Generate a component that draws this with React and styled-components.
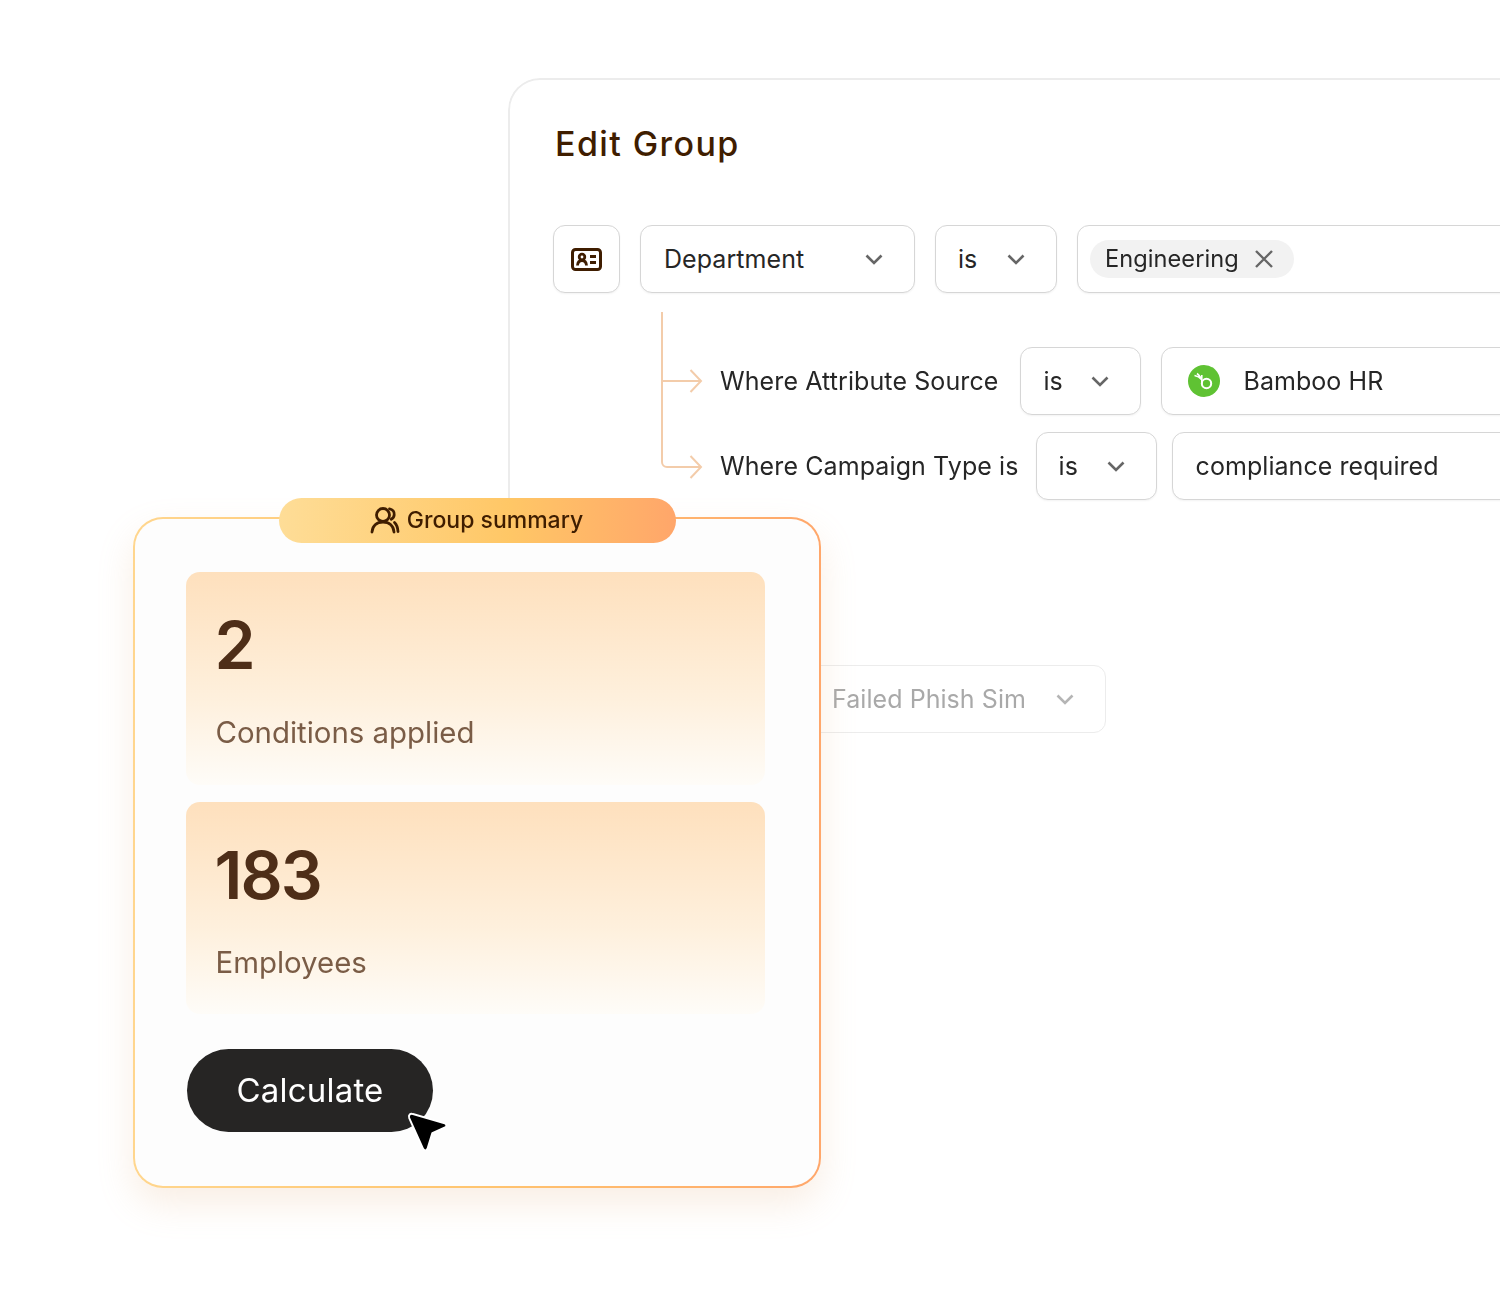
import React from "react";
import styled, { createGlobalStyle } from "styled-components";

const GlobalStyle = createGlobalStyle`
body{
    margin: 0;
    background: #fff;
    font-family: "Inter", "Liberation Sans", sans-serif;
}
`

const Stage = styled.div`
    position: relative;
    width: 1500px;
    height: 1310px;
    overflow: hidden;
    padding: 78px 0 0 508px;
    box-sizing: border-box;
`

const Panel = styled.section`
    width: 1100px;
    height: 760px;
    box-sizing: border-box;
    padding: 44px 0 0 43px;
    border: 2px solid #ececec;
    border-radius: 32px;
    background: #fff;
    -webkit-mask-image: linear-gradient(180deg, #000 88%, transparent 98%);
    mask-image: linear-gradient(180deg, #000 88%, transparent 98%);
`

const Title = styled.h1`
    margin: 0 0 61px 2px;
    font-size: 34px;
    line-height: 40px;
    font-weight: 500;
    letter-spacing: 1.4px;
    color: #3f1d00;
`

const Row = styled.div`
    display: flex;
    align-items: center;
    gap: ${(p) => p.$gap || 20}px;
    height: 68px;
`

const Box = styled.div`
    display: flex;
    align-items: center;
    justify-content: ${(p) => (p.$between ? "space-between" : "flex-start")};
    flex: none;
    width: ${(p) => p.$w}px;
    height: 68px;
    box-sizing: border-box;
    padding: ${(p) => p.$pad || "0 30px 0 22px"};
    border: 1.5px solid #d6d6d6;
    border-radius: 12px;
    background: #fff;
    box-shadow: 0 1px 2px rgba(0, 0, 0, .05);
    font-size: 25px;
    letter-spacing: .06px;
    color: #262626;
    white-space: nowrap;
`

const IconBox = styled(Box)`
    justify-content: center;
    padding: 0;
`

const Chip = styled.span`
    display: flex;
    align-items: center;
    gap: 15px;
    height: 38px;
    padding: 0 20px 1px 15px;
    box-sizing: border-box;
    border-radius: 20px;
    background: #f2f2f2;
    font-size: 23.6px;
`

const Tree = styled.div`
    display: flex;
    margin: 19px 0 0 108px;
`

const Connector = styled.svg`
    flex: none;
    display: block;
`

const TreeRows = styled.div`
    display: flex;
    flex-direction: column;
    gap: 17px;
    padding: 35px 0 0 17px;
`

const RowLabel = styled.span`
    font-size: 25px;
    letter-spacing: .1px;
    color: #262626;
    white-space: nowrap;
    margin-right: 2px;
`

const BrandName = styled.span`
    margin-left: 23px;
`

const FadedRow = styled.div`
    margin: 165px 0 0 255px;
`

const FadedBox = styled(Box)`
    border-color: #ececec;
    box-shadow: none;
    color: #a9a9a9;
    padding-left: 23px;
`

const Summary = styled.aside`
    position: absolute;
    left: 133px;
    top: 517px;
    width: 688px;
    height: 671px;
    box-sizing: border-box;
    padding: 53px 54px 0 51px;
    border: 2px solid transparent;
    border-radius: 30px;
    background:
        linear-gradient(#fdfdfd, #fdfdfd) padding-box,
        linear-gradient(90deg, #ffd68e 0%, #ffc570 50%, #ffa76b 100%) border-box;
    box-shadow: 0 16px 36px rgba(225, 170, 120, .2);
`

const Pill = styled.div`
    position: absolute;
    left: 144px;
    top: -21px;
    width: 397px;
    height: 45px;
    box-sizing: border-box;
    padding: 0 2px 2px 0;
    display: flex;
    align-items: center;
    justify-content: center;
    gap: 7px;
    border-radius: 23px;
    background: linear-gradient(90deg, #fedd97 0%, #ffc766 58%, #ffa66a 100%);
    font-size: 23px;
    font-weight: 500;
    color: #3f1d00;
`

const Stat = styled.div`
    box-sizing: border-box;
    height: ${(p) => p.$h}px;
    margin-bottom: 17px;
    padding: 33px 29.5px 0;
    border-radius: 14px;
    background: linear-gradient(180deg, #fee0bd 0%, #fef0dd 60%, #fefcf8 100%);
`

const StatValue = styled.div`
    margin-left: -1px;
    font-size: 66px;
    line-height: 80px;
    font-weight: 600;
    letter-spacing: -2px;
    color: #4e2e18;
`

const StatLabel = styled.div`
    margin-top: 30px;
    font-size: 29.4px;
    line-height: 36px;
    color: #7a5c46;
`

const CalcButton = styled.button`
    display: block;
    width: 246px;
    height: 83px;
    margin: 35px 0 0 1px;
    padding: 0 0 2px;
    border: 0;
    border-radius: 42px;
    background: #262524;
    color: #fff;
    font-family: inherit;
    font-size: 33px;
    letter-spacing: .2px;
`

const Pointer = styled.svg`
    position: absolute;
    left: 271px;
    top: 593px;
`

const Chevron = ({ color = "#666" }) => (
    <svg width="20" height="20" viewBox="0 0 20 20" fill="none">
        <path d="M2.5 6.5 10 14l7.500-7.500" stroke={color} strokeWidth="2.6" />
    </svg>
)

const CloseIcon = () => (
    <svg width="20" height="20" viewBox="0 0 20 20" fill="none">
        <path d="M2 2l16 16M18 2 2 18" stroke="#666" strokeWidth="2.4" />
    </svg>
)

const IdCardIcon = () => (
    <svg width="31" height="23" viewBox="0 0 31 23" fill="none" stroke="#3f1d00">
        <rect x="1.500" y="1.500" width="28" height="20" rx="3" strokeWidth="3" />
        <circle cx="11" cy="9" r="2.800" strokeWidth="2.800" />
        <path d="M6.500 17.500c.3-3.500 2-5 4.500-5s4.200 1.500 4.500 5" strokeWidth="2.800" />
        <path d="M19 8.500h6M19 14.500h6" strokeWidth="3" />
    </svg>
)

const BambooLogo = () => (
    <svg width="32" height="32" viewBox="0 0 32 32" fill="none">
        <circle cx="16" cy="16" r="16" fill="#5fc233" />
        <circle cx="18.500" cy="18.500" r="4.700" stroke="#fff" strokeWidth="2" />
        <path d="M13.800 10v9M13.500 14.500C11.500 12 9.500 11 6.500 10.500M13 13c-1-1.500-2-3-4-4.500" stroke="#fff" strokeWidth="1.600" />
    </svg>
)

const GroupIcon = () => (
    <svg width="30" height="28" viewBox="0 0 30 28" fill="none" stroke="#3f1d00" strokeWidth="2.800" strokeLinecap="round">
        <circle cx="13" cy="9" r="6.500" />
        <path d="M2 26c.5-6.500 5-10 11-10s10.500 3.500 11 10" />
        <path d="M19.500 2.800c3.200.5 5 3.200 4.700 6-.2 2-1.300 3.500-3 4.500" />
        <path d="M24.500 16.500c2.200 2 3.200 5 3.500 9" />
    </svg>
)

const Connectors = () => (
    <Connector width="42" height="168" viewBox="0 0 42 168" fill="none" stroke="#f3ccaa" strokeWidth="2">
        <path d="M1 0V150a5 5 0 0 0 5 5H40" />
        <path d="M1 69H40" />
        <path d="M29.500 58l10.500 11-10.500 11" />
        <path d="M29.500 144l10.500 11-10.500 11" />
    </Connector>
)

function App() {
    return (
        <Stage>
            <GlobalStyle />
            <Panel>
                <Title>Edit Group</Title>
                <Row>
                    <IconBox $w={67}><IdCardIcon /></IconBox>
                    <Box $w={275} $pad="0 30px 0 23px" $between>Department <Chevron /></Box>
                    <Box $w={122} $between>is <Chevron /></Box>
                    <Box $w={600} $pad="0 12px">
                        <Chip>Engineering <CloseIcon /></Chip>
                    </Box>
                </Row>
                <Tree>
                    <Connectors />
                    <TreeRows>
                        <Row>
                            <RowLabel>Where Attribute Source</RowLabel>
                            <Box $w={121} $between>is <Chevron /></Box>
                            <Box $w={500} $pad="0 0 0 26px">
                                <BambooLogo />
                                <BrandName>Bamboo HR</BrandName>
                            </Box>
                        </Row>
                        <Row $gap={15}>
                            <RowLabel>Where Campaign Type is</RowLabel>
                            <Box $w={121} $between>is <Chevron /></Box>
                            <Box $w={500} $pad="0 0 0 23px">compliance required</Box>
                        </Row>
                    </TreeRows>
                </Tree>
                <FadedRow>
                    <FadedBox $w={298} $between>
                        Failed Phish Sim <Chevron color="#b5b5b5" />
                    </FadedBox>
                </FadedRow>
            </Panel>
            <Summary>
                <Pill><GroupIcon /> Group summary</Pill>
                <Stat $h={213}>
                    <StatValue>2</StatValue>
                    <StatLabel>Conditions applied</StatLabel>
                </Stat>
                <Stat $h={212}>
                    <StatValue>183</StatValue>
                    <StatLabel>Employees</StatLabel>
                </Stat>
                <CalcButton>Calculate</CalcButton>
                <Pointer width="43" height="40" viewBox="0 0 40 37">
                    <path d="M3 5.500C2 2.500 4 1 6.500 1.800L36 10.500c2 .6 2 3 .3 3.700L24.500 19.500 20 34c-.7 2-3 2.200-4 .4Z" fill="#000" stroke="#fff" strokeWidth="1.800" strokeLinejoin="round" />
                </Pointer>
            </Summary>
        </Stage>
    )
}

export default App
